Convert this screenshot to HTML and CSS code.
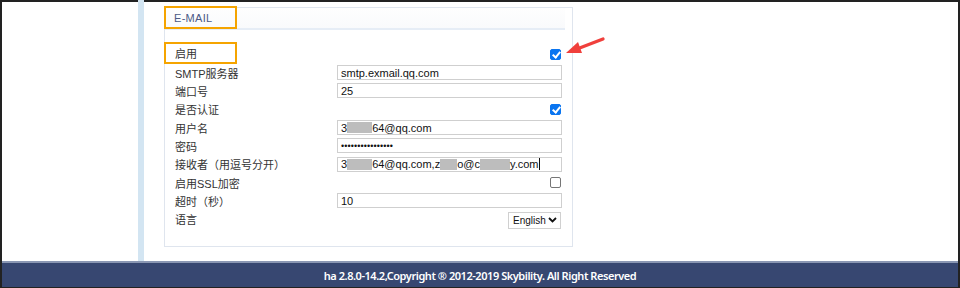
FILE: index.html
```html
<!DOCTYPE html>
<html lang="zh">
<head>
    <meta charset="UTF-8">
    <title>E-MAIL</title>
    <link rel="stylesheet" href="styles.css">
</head>
<body>
    <div class="frame">
        <div class="page">
            <div class="strip"></div>
            <div class="panel">
                <div class="panel-head"><span class="mark head-mark">E-MAIL</span></div>
                <div class="form">
                    <div class="label"><span class="mark row-mark">启用</span></div>
                    <div class="ctrl right"><span class="check on"></span></div>

                    <div class="label">SMTP服务器</div>
                    <div class="ctrl"><div class="field">smtp.exmail.qq.com</div></div>

                    <div class="label">端口号</div>
                    <div class="ctrl"><div class="field">25</div></div>

                    <div class="label">是否认证</div>
                    <div class="ctrl right"><span class="check on"></span></div>

                    <div class="label">用户名</div>
                    <div class="ctrl"><div class="field">3<span class="blur w25"></span>64@qq.com</div></div>

                    <div class="label">密码</div>
                    <div class="ctrl"><div class="field dots">&bull;&bull;&bull;&bull;&bull;&bull;&bull;&bull;&bull;&bull;&bull;&bull;&bull;&bull;&bull;&bull;</div></div>

                    <div class="label">接收者（用逗号分开）</div>
                    <div class="ctrl"><div class="field">3<span class="blur w25"></span>64@qq.com,z<span class="blur w17"></span>o@c<span class="blur w30"></span>y.com<span class="caret"></span></div></div>

                    <div class="label">启用SSL加密</div>
                    <div class="ctrl right"><span class="check"></span></div>

                    <div class="label">超时（秒）</div>
                    <div class="ctrl"><div class="field">10</div></div>

                    <div class="label">语言</div>
                    <div class="ctrl right">
                        <div class="select">English
                            <svg width="9" height="6" viewBox="0 0 9 6"><path d="M1 1 L4.5 4.5 L8 1" fill="none" stroke="#111" stroke-width="1.8"/></svg>
                        </div>
                    </div>
                </div>
            </div>
            <svg class="arrow" width="44" height="22" viewBox="0 0 44 22">
                <path d="M40 3 L14 13" stroke="#f0403c" stroke-width="3.2" stroke-linecap="round"/>
                <path d="M3 17 L15 6 L19 17 Z" fill="#f0403c"/>
            </svg>
        </div>
        <footer>ha 2.8.0-14.2,Copyright &reg; 2012-2019 Skybility. All Right Reserved</footer>
    </div>
</body>
</html>
```

FILE: styles.css
```css
* {
    margin: 0;
    padding: 0;
    box-sizing: border-box;
}
body {
    background: #fff;
    font-family: "Liberation Sans", "Noto Sans CJK SC", sans-serif;
    font-size: 11px;
    color: #333;
}
.frame {
    width: 960px;
    height: 288px;
    border: 2px solid #222;
    display: flex;
    flex-direction: column;
}
.page {
    position: relative;
    flex: 1;
    display: flex;
    padding-left: 136px;
    gap: 20px;
    margin-top: -2px;
}
.strip {
    width: 6px;
    height: 261px;
    background: #d3e5f2;
}
.panel {
    margin-top: 7px;
    width: 409px;
    height: 240px;
    border: 1px solid #dfe5ee;
}
.panel-head {
    height: 22px;
    margin-right: 7px;
    border-bottom: 2px solid #e6edf6;
    background: linear-gradient(#fefefe, #f9fafc);
    display: flex;
    align-items: center;
}
.mark {
    display: inline-flex;
    align-items: center;
    border: 2px solid #f5a400;
}
.head-mark {
    width: 73px;
    height: 23px;
    margin-left: -1px;
    margin-top: -1px;
    padding-left: 8px;
    color: #4b5a86;
    letter-spacing: 0.3px;
}
.form {
    display: grid;
    grid-template-columns: 162px 225px;
    grid-auto-rows: 18.35px;
    padding: 15px 10px 0 10px;
}
.label {
    display: flex;
    align-items: center;
    white-space: nowrap;
}
.row-mark {
    width: 73px;
    height: 22px;
    margin-left: -11px;
    padding-left: 9px;
    margin-top: -3px;
}
.ctrl {
    display: flex;
    align-items: center;
}
.right {
    justify-content: flex-end;
    padding-right: 1px;
}
.field {
    width: 225px;
    height: 15px;
    border: 1px solid #cfcfcf;
    padding-left: 3px;
    display: flex;
    align-items: center;
    color: #111;
    white-space: nowrap;
}
.dots {
    font-size: 9px;
    letter-spacing: 0.1px;
}
.blur {
    display: inline-block;
    height: 11px;
    background: #bdbdbd;
}
.w17 { width: 17px; }
.w25 { width: 25px; }
.w30 { width: 30px; }
.caret {
    display: inline-block;
    width: 1px;
    height: 12px;
    background: #111;
    margin-left: 1px;
}
.check {
    width: 11px;
    height: 11px;
    border: 1px solid #767676;
    border-radius: 2px;
    background: #fff;
    position: relative;
}
.check.on {
    background: #0a75f0;
    border-color: #0a75f0;
}
.check.on::after {
    content: "";
    position: absolute;
    left: 3px;
    top: 0px;
    width: 3px;
    height: 6px;
    border: solid #fff;
    border-width: 0 2px 2px 0;
    transform: rotate(40deg);
}
.select {
    width: 53px;
    height: 17px;
    border: 1px solid #d0d0d0;
    display: flex;
    align-items: center;
    justify-content: space-between;
    padding: 0 3px 0 4px;
    font-size: 10px;
    color: #111;
    margin-top: 2px;
    white-space: nowrap;
}
.arrow {
    position: absolute;
    left: 561px;
    top: 36px;
}
footer {
    height: 26px;
    background: #374771;
    border-top: 2px solid #8a97b3;
    color: #fff;
    font-family: "Noto Sans", sans-serif;
    font-weight: 600;
    font-size: 11px;
    letter-spacing: -0.45px;
    text-align: center;
    line-height: 22px;
    padding-top: 2px;
}
```
